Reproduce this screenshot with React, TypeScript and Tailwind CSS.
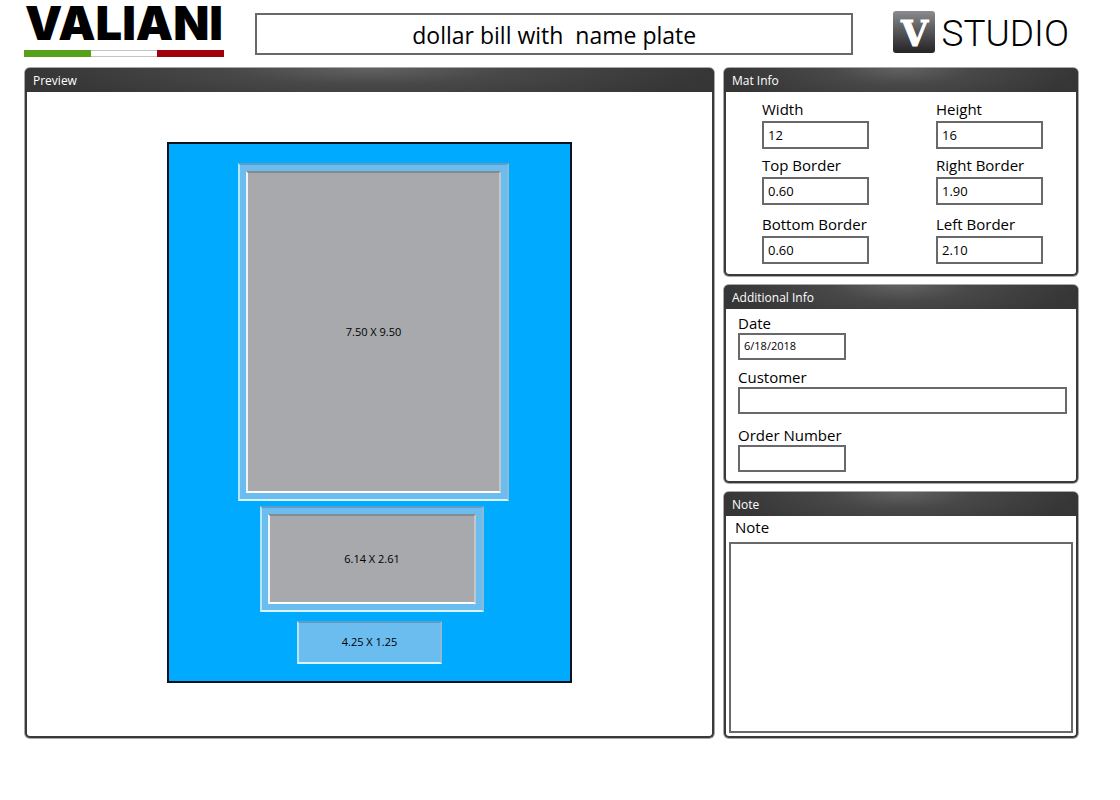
import { useState, type ReactNode } from "react";
import clsx from "clsx";

interface FieldProps {
  id: string;
  label: string;
  value: string;
  onChange: (id: string, value: string) => void;
  className?: string;
  labelClass?: string;
  inputClass?: string;
}

interface Opening {
  label: string;
  place: string;
  nested: boolean;
}

const WIDTH_FIELDS = [
  { id: "width", label: "Width", gap: "" },
  { id: "top", label: "Top Border", gap: "mt-2" },
  { id: "bottom", label: "Bottom Border", gap: "mt-[11px]" },
];

const HEIGHT_FIELDS = [
  { id: "height", label: "Height", gap: "" },
  { id: "right", label: "Right Border", gap: "mt-2" },
  { id: "left", label: "Left Border", gap: "mt-[11px]" },
];

const OPENINGS: Opening[] = [
  { label: "7.50 X 9.50", place: "left-[69px] top-[19px] h-[338px] w-[271px]", nested: true },
  { label: "6.14 X 2.61", place: "left-[91px] top-[362px] h-[106px] w-[224px]", nested: true },
  { label: "4.25 X 1.25", place: "left-[128px] top-[477px] h-[43px] w-[145px]", nested: false },
];

function Panel({ title, className, children }: { title: string; className?: string; children: ReactNode }) {
  return (
    <section
      className={clsx(
        "m-px flex flex-col rounded-[5px] border-x-2 border-b-2 border-[#3a3a3a] bg-white shadow-[0_0_0_1px_#a8a8a8]",
        className,
      )}
    >
      <h2 className="-mx-0.5 h-6 shrink-0 rounded-t-[5px] bg-[#363636] bg-[radial-gradient(ellipse_50%_170%_at_50%_0%,#626262_0%,#484848_40%,#363636_100%)] px-2 text-xs leading-[25px] text-white">
        {title}
      </h2>
      {children}
    </section>
  );
}

function Field({ id, label, value, onChange, className, labelClass, inputClass }: FieldProps) {
  return (
    <div className={clsx("flex flex-col", className)}>
      <label htmlFor={id} className={clsx("h-5 text-[15px] whitespace-nowrap", labelClass)}>
        {label}
      </label>
      <input
        id={id}
        type="text"
        value={value}
        onChange={(e) => onChange(id, e.target.value)}
        className={clsx("border-2 border-[#696969] bg-white px-1 outline-none", inputClass)}
      />
    </div>
  );
}

function MatOpening({ label, place, nested }: Opening) {
  return (
    <div
      className={clsx(
        "absolute flex border-2 border-t-[#5f9dc6] border-r-[#8fb9d3] border-b-[#d9f6ff] border-l-[#b5e6ff] bg-[#6bbdf0] text-[11px]",
        nested && "p-1.5",
        place,
      )}
    >
      <div
        className={clsx(
          "flex flex-1 items-center justify-center",
          nested && "border-2 border-t-[#858b90] border-r-[#c3c7ca] border-b-white border-l-[#eef4f8] bg-[#a7a9ac]",
        )}
      >
        {label}
      </div>
    </div>
  );
}

function ValianiLogo() {
  return (
    <div className="w-[200px] shrink-0">
      <div className="flex h-[42px] items-center justify-center font-[Inter] text-[47px] leading-[42px] font-black text-black">
        VALIANI
      </div>
      <div className="mt-1.5 flex h-[7px]">
        <span className="flex-1 bg-[#56a01c]" />
        <span className="flex-1 border-y border-[#c4c4c4] bg-white" />
        <span className="flex-1 bg-[#a0000c]" />
      </div>
    </div>
  );
}

function StudioLogo() {
  return (
    <div className="flex shrink-0 gap-1.5">
      <span className="flex h-[42px] w-[42px] items-center justify-center rounded-[3px] bg-linear-to-b from-[#8b8c8f] to-[#242426] pt-1 font-['DejaVu_Serif'] text-[35px] leading-[42px] font-bold text-white [-webkit-text-stroke:1px_white]">
        V
      </span>
      <span className="font-[Roboto] text-[37px] leading-[46px] font-light text-black">STUDIO</span>
    </div>
  );
}

export default function App() {
  const [title, setTitle] = useState("dollar bill with  name plate");
  const [note, setNote] = useState("");
  const [values, setValues] = useState<Record<string, string>>({
    width: "12",
    height: "16",
    top: "0.60",
    right: "1.90",
    bottom: "0.60",
    left: "2.10",
    date: "6/18/2018",
    customer: "",
    order: "",
  });

  const update = (id: string, value: string) => setValues((v) => ({ ...v, [id]: value }));

  return (
    <div className="min-h-screen bg-white pr-[41px] pl-6 font-['Open_Sans',sans-serif] text-black">
      <header className="flex h-[67px] items-start pr-2.5">
        <div className="pt-0.5">
          <ValianiLogo />
        </div>
        <input
          type="text"
          aria-label="Title"
          value={title}
          onChange={(e) => setTitle(e.target.value)}
          className="mt-[13px] mr-10 ml-[31px] h-[42px] min-w-0 flex-1 border-2 border-[#696969] bg-white pt-0.5 text-center text-[23px] outline-none"
        />
        <div className="pt-[11px]">
          <StudioLogo />
        </div>
      </header>

      <main className="flex gap-2">
        <Panel title="Preview" className="min-w-0 flex-1">
          <div className="flex flex-1 items-center justify-center pt-[50px] pb-[53px]">
            <div className="relative h-[541px] w-[405px] border-2 border-[#06131c] bg-[#00abff]">
              {OPENINGS.map((o) => (
                <MatOpening key={o.label} {...o} />
              ))}
            </div>
          </div>
        </Panel>

        <div className="flex w-[356px] shrink-0 flex-col gap-[7px]">
          <Panel title="Mat Info">
            <div className="flex justify-between pt-[9px] pr-[33px] pb-2.5 pl-9">
              {[WIDTH_FIELDS, HEIGHT_FIELDS].map((fields) => (
                <div key={fields[0].id} className="w-[107px]">
                  {fields.map((f) => (
                    <Field
                      key={f.id}
                      id={f.id}
                      label={f.label}
                      value={values[f.id]}
                      onChange={update}
                      className={f.gap}
                      labelClass="leading-4"
                      inputClass="h-7 text-[13px]"
                    />
                  ))}
                </div>
              ))}
            </div>
          </Panel>

          <Panel title="Additional Info">
            <div className="pt-1 pr-[9px] pb-[9px] pl-3">
              <Field
                id="date"
                label="Date"
                value={values.date}
                onChange={update}
                labelClass="leading-5"
                inputClass="h-[27px] w-[108px] pb-0.5 text-[11px]"
              />
              <Field
                id="customer"
                label="Customer"
                value={values.customer}
                onChange={update}
                className="mt-[7px]"
                labelClass="leading-5"
                inputClass="h-[27px] text-[13px]"
              />
              <Field
                id="order"
                label="Order Number"
                value={values.order}
                onChange={update}
                className="mt-[11px]"
                labelClass="leading-5"
                inputClass="h-[27px] w-[108px] text-[13px]"
              />
            </div>
          </Panel>

          <Panel title="Note" className="flex-1">
            <div className="flex flex-1 flex-col p-[3px]">
              <label htmlFor="note" className="h-[23px] px-1.5 text-[15px] leading-4">
                Note
              </label>
              <textarea
                id="note"
                value={note}
                onChange={(e) => setNote(e.target.value)}
                className="min-h-[120px] flex-1 resize-none border-2 border-[#696969] bg-white p-1 text-[13px] outline-none"
              />
            </div>
          </Panel>
        </div>
      </main>
    </div>
  );
}
